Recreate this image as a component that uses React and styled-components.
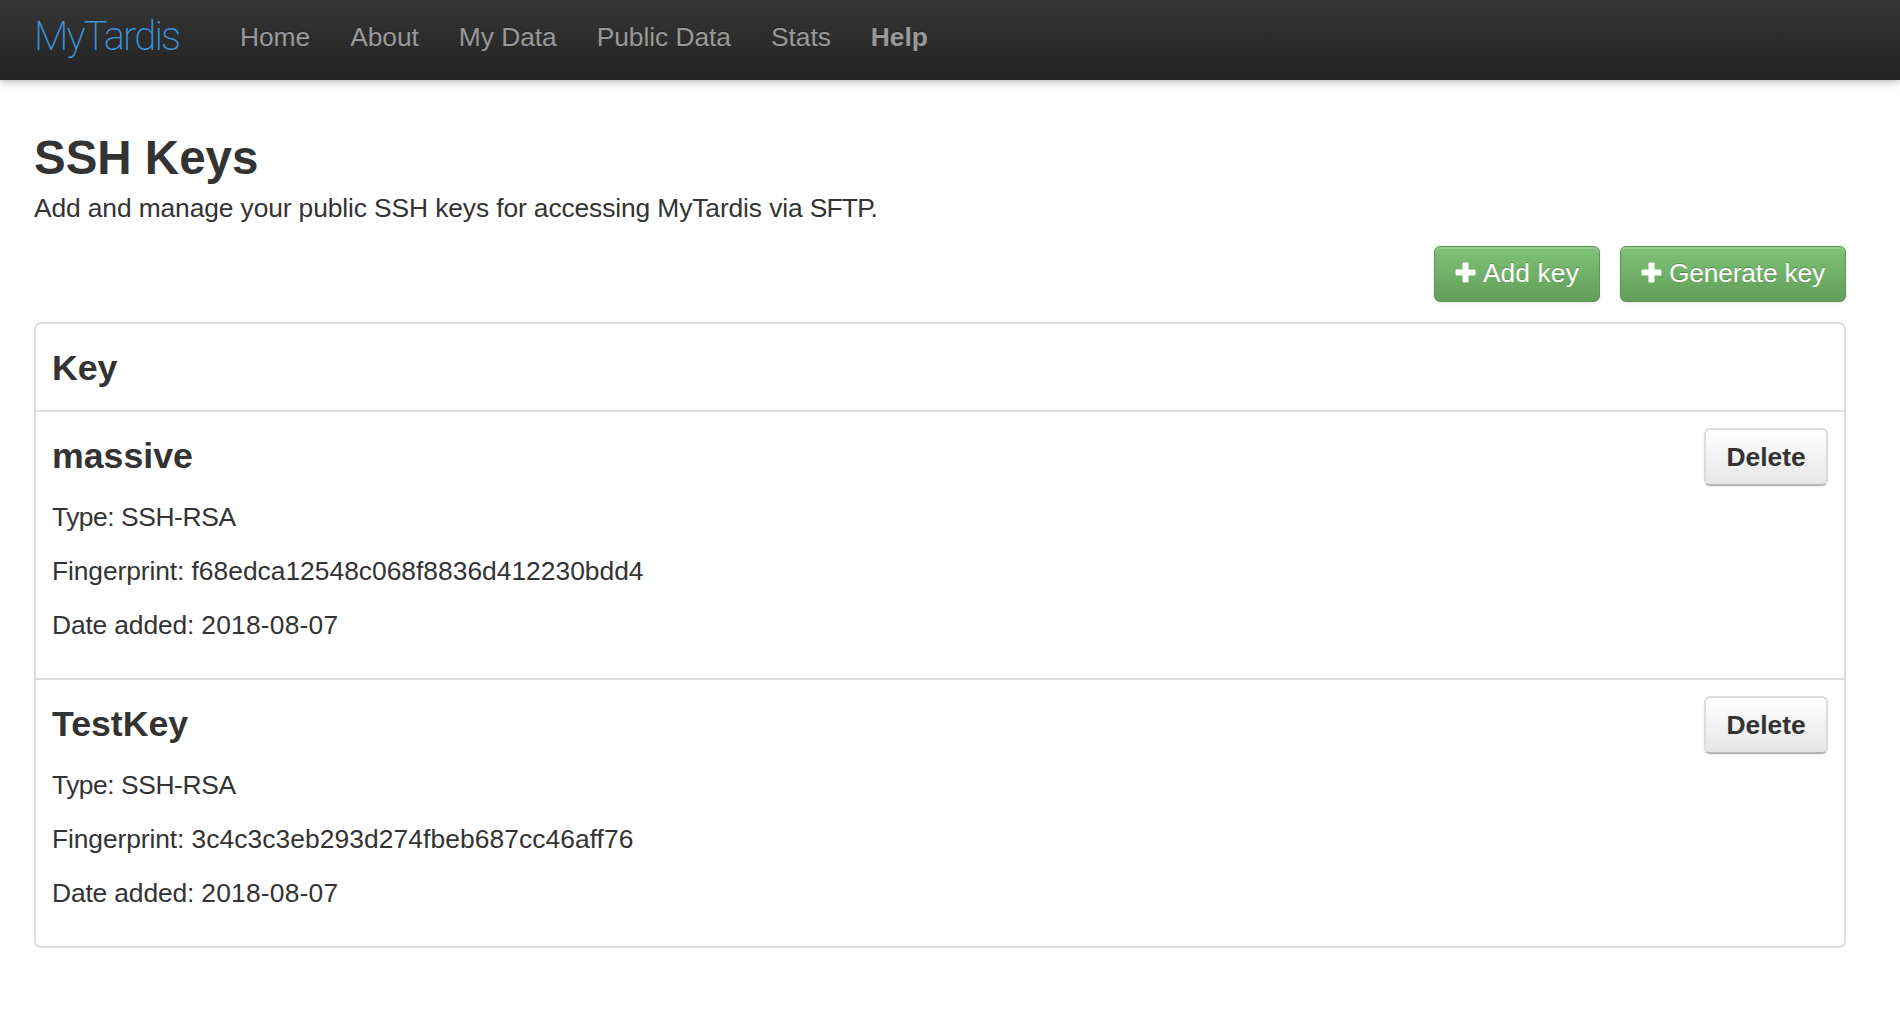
import React from "react";
import styled, { createGlobalStyle } from "styled-components";

const Global = createGlobalStyle`
  html, body { margin: 0; padding: 0; background: #fff; }
  body { font-family: "Liberation Sans", Arial, sans-serif; font-size: 26.4px; color: #333; }
`;

const Navbar = styled.header`
  height: 74px;
  display: flex;
  align-items: center;
  padding: 0 0 6px 34px;
  background: linear-gradient(#363636, #222);
  box-shadow: 0 2px 8px rgba(0, 0, 0, 0.28);
`;
const Brand = styled.a`
  font-family: "Roboto", "Liberation Sans", sans-serif;
  font-weight: 200;
  font-size: 40px;
  letter-spacing: -1.85px;
  color: #3d94da;
  width: 206px;
  flex: none;
  position: relative;
  top: -1px;
`;
const NavLinks = styled.nav`
  display: flex;
  gap: 40px;
  letter-spacing: -0.06px;
`;
const NavLink = styled.a`
  color: #999;
  font-weight: ${(p) => (p.$bold ? 700 : 400)};
  text-shadow: 0 -1px 0 rgba(0, 0, 0, 0.25);
`;
const Main = styled.main`
  padding: 51px 54px 0 34px;
`;
const Title = styled.h1`
  margin: 0;
  font-size: 47.5px;
  line-height: 54px;
  font-weight: 700;
  color: #333;
`;
const Lead = styled.p`
  margin: 5px 0 0;
  line-height: 36px;
  letter-spacing: -0.12px;
  color: #333;
`;
const Actions = styled.div`
  display: flex;
  justify-content: flex-end;
  gap: 20px;
  margin-top: 20px;
`;
const GreenButton = styled.button`
  height: 56px;
  padding: 0 20px 2px;
  display: flex;
  align-items: center;
  gap: 7px;
  font: inherit;
  letter-spacing: ${(p) => p.$track}px;
  color: #fff;
  background: linear-gradient(#7fc276, #629e5a);
  border: 1px solid #5c9754;
  border-radius: 6px;
  box-shadow: inset 0 2px 0 rgba(255, 255, 255, 0.18), 0 1px 3px rgba(0, 0, 0, 0.12);
  text-shadow: 0 -1px 0 rgba(0, 0, 0, 0.25);
`;
const PlusIcon = styled.svg`
  width: 21px;
  height: 21px;
  flex: none;
  position: relative;
  top: -1px;
`;
const Panel = styled.section`
  margin-top: 20px;
  border: 2px solid #ddd;
  border-radius: 7px;
`;
const PanelHead = styled.div`
  height: 85px;
  padding: 1px 0 0 16px;
  display: flex;
  align-items: center;
`;
const Heading = styled.h3`
  margin: 0;
  font-size: 35.7px;
  line-height: 42px;
  font-weight: 700;
  color: #333;
`;
const Row = styled.article`
  border-top: 2px solid #ddd;
  padding: 16px 16px 0;
  box-sizing: border-box;
  height: 268px;
  display: flex;
  justify-content: space-between;
  align-items: flex-start;
`;
const RowBody = styled.div`
  padding-top: 7px;
`;
const Line = styled.p`
  margin: 0;
  height: 54px;
  line-height: 54px;
  &:first-of-type { margin-top: 13px; }
`;
const Tracked = styled.span`
  letter-spacing: ${(p) => p.$track}px;
`;
const DeleteButton = styled.button`
  width: 124px;
  height: 58px;
  font: inherit;
  font-weight: 700;
  color: #333;
  background: linear-gradient(#fff, #e6e6e6);
  border: 2px solid #dcdcdc;
  border-bottom-color: #b5b5b5;
  border-radius: 6px;
  box-shadow: 0 1px 2px rgba(0, 0, 0, 0.08);
  padding: 0;
`;

const Plus = () => (
  <PlusIcon viewBox="0 0 21 21" aria-hidden="true">
    <path d="M7.5 1.5a1 1 0 0 1 1-1h4a1 1 0 0 1 1 1V7.5h6a1 1 0 0 1 1 1v4a1 1 0 0 1-1 1h-6v6a1 1 0 0 1-1 1h-4a1 1 0 0 1-1-1v-6h-6a1 1 0 0 1-1-1v-4a1 1 0 0 1 1-1h6z" fill="#fff" />
  </PlusIcon>
);

const keys = [
  { name: "massive", fp: "f68edca12548c068f8836d412230bdd4", fpTrack: 0 },
  { name: "TestKey", fp: "3c4c3c3eb293d274fbeb687cc46aff76", fpTrack: 0.07 },
];
const links = ["Home", "About", "My Data", "Public Data", "Stats"];

export default function App() {
  return (
    <>
      <Global />
      <Navbar>
        <Brand>MyTardis</Brand>
        <NavLinks>
          {links.map((l) => (
            <NavLink key={l}>{l}</NavLink>
          ))}
          <NavLink $bold>Help</NavLink>
        </NavLinks>
      </Navbar>
      <Main>
        <Title>SSH Keys</Title>
        <Lead>
          Add and manage your public SSH keys for accessing MyTardis via <Tracked $track={-0.8}>SFTP.</Tracked>
        </Lead>
        <Actions>
          <GreenButton $track={0.1}><Plus />Add key</GreenButton>
          <GreenButton $track={-0.2}><Plus />Generate key</GreenButton>
        </Actions>
        <Panel>
          <PanelHead><Heading>Key</Heading></PanelHead>
          {keys.map((k) => (
            <Row key={k.name}>
              <RowBody>
                <Heading>{k.name}</Heading>
                <Line><Tracked $track={-0.5}>Type: </Tracked><Tracked $track={-0.35}>SSH-RSA</Tracked></Line>
                <Line><Tracked $track={-0.1}>Fingerprint: </Tracked><Tracked $track={k.fpTrack}>{k.fp}</Tracked></Line>
                <Line><Tracked $track={-0.15}>Date added: </Tracked><Tracked $track={0.2}>2018-08-07</Tracked></Line>
              </RowBody>
              <DeleteButton>Delete</DeleteButton>
            </Row>
          ))}
        </Panel>
      </Main>
    </>
  );
}
